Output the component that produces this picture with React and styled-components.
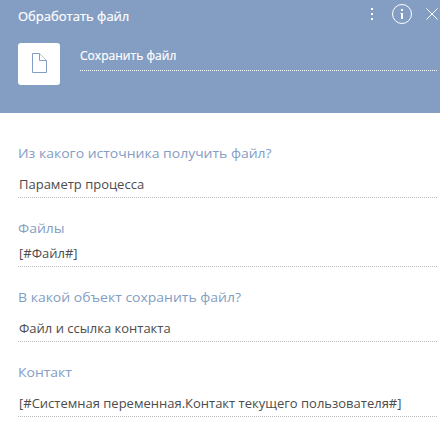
import React from "react";
import styled, { createGlobalStyle } from "styled-components";

const Global = createGlobalStyle`
  * { box-sizing: border-box; }
  body { margin: 0; background: #fff; font-family: "Open Sans", sans-serif; }
`;
const Panel = styled.main`
  width: 440px;
  height: 430px;
  overflow: hidden;
`;
const Header = styled.header`
  height: 113px;
  background: #849dc3;
  color: #fff;
`;
const TitleBar = styled.div`
  display: flex;
  justify-content: space-between;
  height: 33px;
  padding-left: 18px;
`;
const Title = styled.h1`
  margin: 0;
  padding-top: 7px;
  font-size: 13px;
  line-height: 18px;
  font-weight: 400;
  -webkit-text-stroke: 0.2px #fff;
`;
const Actions = styled.div`
  display: flex;
  width: 78px;
  height: 28px;
`;
const Element = styled.div`
  display: flex;
  gap: 20px;
  padding: 10px 3px 0 18px;
`;
const IconTile = styled.div`
  display: grid;
  place-items: center;
  width: 42px;
  height: 42px;
  border-radius: 3px;
  background: #fff;
`;
const Name = styled.div`
  flex: 1;
  height: 28px;
  padding-top: 5px;
  border-bottom: 1px dotted #fff;
  font-size: 12px;
  line-height: 16px;
  letter-spacing: 0.03px;
  -webkit-text-stroke: 0.2px #fff;
`;
const Form = styled.div`
  padding: 31px 3px 0 18px;
`;
const Field = styled.section`
  height: ${(p) => p.$height}px;
`;
const Label = styled.div`
  height: 18px;
  font-size: 13px;
  line-height: 18px;
  color: #849dc3;
  width: fit-content;
  white-space: nowrap;
  transform: scaleX(1.075);
  transform-origin: left;
`;
const Value = styled.div`
  height: ${(p) => p.$height}px;
  display: flex;
  align-items: flex-end;
  padding: 0 0 4px 1px;
  border-bottom: 1px dotted #bcbcbc;
  font-size: 13px;
  line-height: 18px;
  color: #4c4c4c;
`;

const fields = [
  ["Из какого источника получить файл?", "Параметр процесса", 75, 36],
  ["Файлы", "[#Файл#]", 69, 30],
  ["В какой объект сохранить файл?", "Файл и ссылка контакта", 75, 36],
  ["Контакт", "[#Системная переменная.Контакт текущего пользователя#]", 75, 36],
];

export default function App() {
  return (
    <Panel>
      <Global />
      <Header>
        <TitleBar>
          <Title>Обработать файл</Title>
          <Actions>
            <svg width="78" height="28" viewBox="0 0 78 28" fill="none" stroke="#fff">
              <path d="M9 8h2v2H9zM9 13h2v2H9zM9 18h2v2H9z" fill="#fff" stroke="none" />
              <circle cx="40" cy="14" r="9.5" />
              <path d="M39 9h2v2h-2zM38.5 13H41v6h-2v-5h-.5z" fill="#fff" stroke="none" />
              <path d="M64.5 8.5l11 11M75.5 8.5l-11 11" />
            </svg>
          </Actions>
        </TitleBar>
        <Element>
          <IconTile>
            <svg width="16" height="22" viewBox="0 0 16 22" fill="none" stroke="#849dc3">
              <path d="M8.5.5h-7v19h14v-12h-7z" />
              <path d="M8.5.5l7 7" strokeOpacity=".65" />
            </svg>
          </IconTile>
          <Name>Сохранить файл</Name>
        </Element>
      </Header>
      <Form>
        {fields.map(([label, value, height, valueHeight]) => (
          <Field key={label} $height={height}>
            <Label>{label}</Label>
            <Value $height={valueHeight}>{value}</Value>
          </Field>
        ))}
      </Form>
    </Panel>
  );
}
